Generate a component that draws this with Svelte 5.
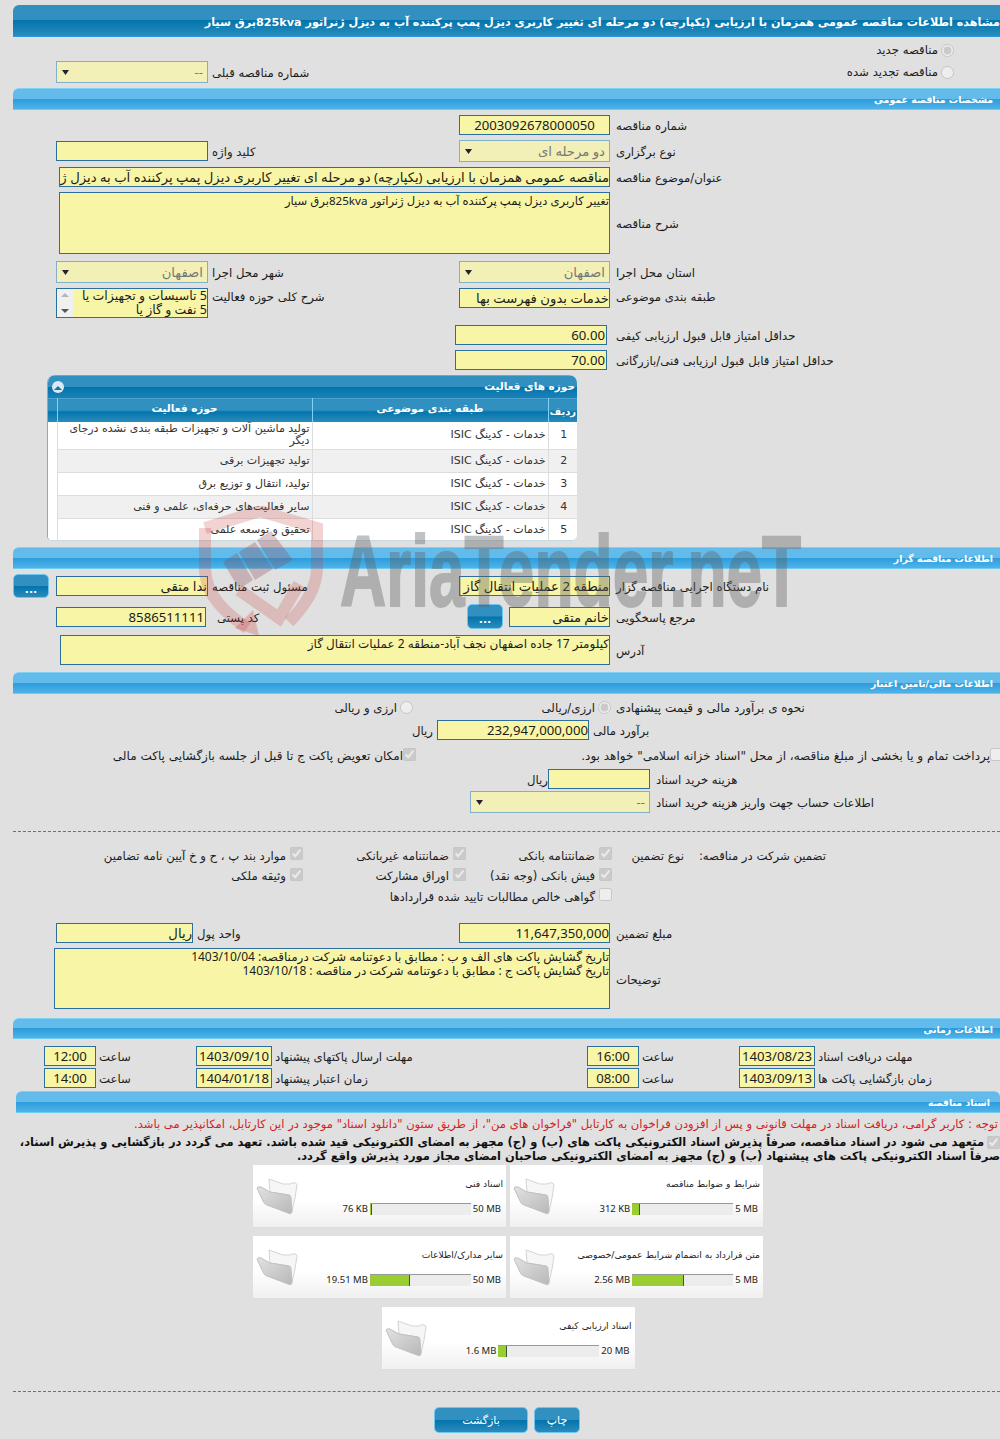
<script>
  const activities = [
    { n: 1, cat: "خدمات - کدینگ ISIC", field: "تولید ماشین آلات و تجهیزات طبقه بندی نشده درجای دیگر" },
    { n: 2, cat: "خدمات - کدینگ ISIC", field: "تولید تجهیزات برقی" },
    { n: 3, cat: "خدمات - کدینگ ISIC", field: "تولید، انتقال و توزیع برق" },
    { n: 4, cat: "خدمات - کدینگ ISIC", field: "سایر فعالیت‌های حرفه‌ای، علمی و فنی" },
    { n: 5, cat: "خدمات - کدینگ ISIC", field: "تحقیق و توسعه علمی" }
  ];

  const docs = [
    { title: "شرایط و ضوابط مناقصه", used: "312 KB", max: "5 MB", fill: 8 },
    { title: "اسناد فنی", used: "76 KB", max: "50 MB", fill: 2 },
    { title: "متن قرارداد به انضمام شرایط عمومی/خصوصی", used: "2.56 MB", max: "5 MB", fill: 52 },
    { title: "سایر مدارک/اطلاعات", used: "19.51 MB", max: "50 MB", fill: 40 },
    { title: "اسناد ارزیابی کیفی", used: "1.6 MB", max: "20 MB", fill: 9 }
  ];

  const arrow = "data:image/svg+xml,%3Csvg xmlns='http://www.w3.org/2000/svg' width='9' height='7'%3E%3Cpath d='M1 1h7L4.500 6z' fill='%23223'/%3E%3C/svg%3E";
</script>

<div class="page" style="--arrow: url(&quot;{arrow}&quot;)">
  <div class="bar dark title">مشاهده اطلاعات مناقصه عمومی همزمان با ارزیابی (یکپارچه) دو مرحله ای تغییر کاربری دیزل پمپ پرکننده آب به دیزل ژنراتور 825kvaبرق سیار</div>

  <div class="row r-new">
    <label class="lr radio-right"><input type="radio" disabled checked />مناقصه جدید</label>
  </div>
  <div class="row r-prev">
    <select class="fl" disabled><option>--</option></select>
    <span class="ll">شماره مناقصه قبلی</span>
    <label class="lr radio-right"><input type="radio" disabled />مناقصه تجدید شده</label>
  </div>

  <div class="bar light m5">مشخصات مناقصه عمومی</div>

  <div class="row m5">
    <input class="fr center" readonly value="2003092678000050" />
    <span class="lr">شماره مناقصه</span>
  </div>
  <div class="row m5">
    <input class="fl" readonly />
    <span class="ll">کلید واژه</span>
    <select class="fr" disabled><option>دو مرحله ای</option></select>
    <span class="lr">نوع برگزاری</span>
  </div>
  <div class="row m5">
    <input class="wide" readonly value="مناقصه عمومی همزمان با ارزیابی (یکپارچه) دو مرحله ای تغییر کاربری دیزل پمپ پرکننده آب به دیزل ژنراتور 825kvaبرق سیار" />
    <span class="lr">عنوان/موضوع مناقصه</span>
  </div>
  <div class="row m5">
    <textarea class="wide desc" readonly>تغییر کاربری دیزل پمپ پرکننده آب به دیزل ژنراتور 825kvaبرق سیار</textarea>
    <span class="lr">شرح مناقصه</span>
  </div>
  <div class="row m7">
    <select class="fl" disabled><option>اصفهان</option></select>
    <span class="ll">شهر محل اجرا</span>
    <select class="fr" disabled><option>اصفهان</option></select>
    <span class="lr">استان محل اجرا</span>
  </div>
  <div class="row m5 top">
    <div class="fl listbox">
      <div class="scroll"><i class="up"></i><i class="down"></i></div>
      <div class="items">5 تاسیسات و تجهیزات یا<br />5 نفت و گاز یا</div>
    </div>
    <span class="ll">شرح کلی حوزه فعالیت</span>
    <input class="fr" readonly value="خدمات بدون فهرست بها" />
    <span class="lr">طبقه بندی موضوعی</span>
  </div>
  <div class="row m7">
    <input class="fr score" readonly value="60.00" />
    <span class="lr">حداقل امتیاز قابل قبول ارزیابی کیفی</span>
  </div>
  <div class="row m5">
    <input class="fr score" readonly value="70.00" />
    <span class="lr">حداقل امتیاز قابل قبول ارزیابی فنی/بازرگانی</span>
  </div>

  <div class="grid-box">
    <div class="grid-head">
      <span>حوزه های فعالیت</span>
      <i class="collapse"></i>
    </div>
    <table>
      <thead>
        <tr>
          <th class="c-n">ردیف</th>
          <th class="c-cat">طبقه بندی موضوعی</th>
          <th class="c-field">حوزه فعالیت</th>
          <th class="c-pad"></th>
        </tr>
      </thead>
      <tbody>
        {#each activities as a}
          <tr class:alt={a.n % 2 === 0} class:tall={a.n === 1}>
            <td class="c-n">{a.n}</td>
            <td class="c-cat">{a.cat}</td>
            <td class="c-field">{a.field}</td>
            <td class="c-pad"></td>
          </tr>
        {/each}
      </tbody>
    </table>
  </div>

  <div class="bar light m6">اطلاعات مناقصه گزار</div>

  <div class="row m5 h24">
    <button class="btn dots lead">...</button>
    <input class="fl" readonly value="ندا متقی" />
    <span class="ll">مسئول ثبت مناقصه</span>
    <input class="fr" readonly value="منطقه 2 عملیات انتقال گاز" />
    <span class="lr">نام دستگاه اجرایی مناقصه گزار</span>
  </div>
  <div class="row m6 h25">
    <input class="fl postal" readonly value="8586511111" />
    <span class="ll postal-l">کد پستی</span>
    <div class="fr-pair">
      <button class="btn dots tall">...</button>
      <input class="contact" readonly value="خانم متقی" />
    </div>
    <span class="lr">مرجع پاسخگویی</span>
  </div>
  <div class="row m6">
    <textarea class="wide addr" readonly>کیلومتر 17 جاده اصفهان نجف آباد-منطقه 2 عملیات انتقال گاز</textarea>
    <span class="lr">آدرس</span>
  </div>

  <div class="bar light m7">اطلاعات مالی/تامین اعتبار</div>

  <div class="row m3 h20">
    <div class="radios">
      <label><input type="radio" disabled checked />ارزی/ریالی</label>
      <label><input type="radio" disabled />ارزی و ریالی</label>
    </div>
    <span class="lr">نحوه ی برآورد مالی و قیمت پیشنهادی</span>
  </div>
  <div class="line m3 budget">
    <span class="unit">ریال</span>
    <input class="w152" readonly value="232,947,000,000" />
    <span>برآورد مالی</span>
  </div>
  <div class="checks m6">
    <label class="pay"><input type="checkbox" disabled />پرداخت تمام و یا بخشی از مبلغ مناقصه، از محل "اسناد خزانه اسلامی" خواهد بود.</label>
    <label><input type="checkbox" disabled checked />امکان تعویض پاکت ج تا قبل از جلسه بازگشایی پاکت مالی</label>
  </div>
  <div class="line m3 cost">
    <span class="unit">ریال</span>
    <input class="w102" readonly />
    <span>هزینه خرید اسناد</span>
  </div>
  <div class="line m2 account">
    <select class="w180" disabled><option>--</option></select>
    <span>اطلاعات حساب جهت واریز هزینه خرید اسناد</span>
  </div>

  <div class="dash d1"></div>

  <div class="guarantee">
    <span>تضمین شرکت در مناقصه:</span>
    <span>نوع تضمین</span>
    <label><input type="checkbox" disabled checked />ضمانتنامه بانکی</label>
    <label><input type="checkbox" disabled checked />ضمانتنامه غیربانکی</label>
    <label><input type="checkbox" disabled checked />موارد بند پ ، ح و خ آیین نامه تضامین</label>
    <span></span><span></span>
    <label><input type="checkbox" disabled checked />فیش بانکی (وجه نقد)</label>
    <label><input type="checkbox" disabled checked />اوراق مشارکت</label>
    <label><input type="checkbox" disabled checked />وثیقه ملکی</label>
    <span></span><span></span>
    <label class="wide-check"><input type="checkbox" disabled />گواهی خالص مطالبات تایید شده قراردادها</label>
  </div>

  <div class="row m17">
    <input class="fl unit-f" readonly value="ریال" />
    <span class="ll unit-l">واحد پول</span>
    <input class="fr" readonly value="11,647,350,000" />
    <span class="lr">مبلغ تضمین</span>
  </div>
  <div class="row m5">
    <textarea class="wide notes" readonly>تاریخ گشایش پاکت های الف و ب : مطابق با دعوتنامه شرکت درمناقصه: 1403/10/04
تاریخ گشایش پاکت ج : مطابق با دعوتنامه شرکت در مناقصه : 1403/10/18</textarea>
    <span class="lr">توضیحات</span>
  </div>

  <div class="bar light short m9">اطلاعات زمانی</div>

  <div class="times m7">
    <input readonly value="12:00" /><span>ساعت</span>
    <input readonly value="1403/09/10" /><span>مهلت ارسال پاکتهای پیشنهاد</span>
    <input readonly value="16:00" /><span>ساعت</span>
    <input readonly value="1403/08/23" /><span>مهلت دریافت اسناد</span>
  </div>
  <div class="times m2">
    <input readonly value="14:00" /><span>ساعت</span>
    <input readonly value="1404/01/18" /><span>زمان اعتبار پیشنهاد</span>
    <input readonly value="08:00" /><span>ساعت</span>
    <input readonly value="1403/09/13" /><span>زمان بازگشایی پاکت ها</span>
  </div>

  <div class="bar light docs-bar">اسناد مناقصه</div>

  <p class="notice">توجه : کاربر گرامی، دریافت اسناد در مهلت قانونی و پس از افزودن فراخوان به کارتابل "فراخوان های من"، از طریق ستون "دانلود اسناد" موجود در این کارتابل، امکانپذیر می باشد.</p>
  <p class="commit">
    <input type="checkbox" disabled checked />متعهد می شود در اسناد مناقصه، صرفاً پذیرش اسناد الکترونیکی پاکت های (ب) و (ج) مجهز به امضای الکترونیکی قید شده باشد. تعهد می گردد در بازگشایی و پذیرش اسناد،<br />
    صرفاً اسناد الکترونیکی پاکت های پیشنهاد (ب) و (ج) مجهز به امضای الکترونیکی صاحبان امضای مجاز مورد پذیرش واقع گردد.
  </p>

  <div class="cards">
    {#each docs as d}
      <div class="card">
        <div class="card-body">
          <div class="card-title">{d.title}</div>
          <div class="meter">
            <span class="used">{d.used}</span>
            <div class="track"><div class="fill" style="width: {d.fill}px"></div></div>
            <span class="max">{d.max}</span>
          </div>
        </div>
        <svg class="folder" viewBox="0 0 43 38" width="43" height="38">
          <defs>
            <linearGradient id="fold{d.fill}" x1="0" y1="0" x2="1" y2="1">
              <stop offset="0" stop-color="#e2e2e2" />
              <stop offset="1" stop-color="#b8b8b8" />
            </linearGradient>
          </defs>
          <path d="M13 1 L27 6 L34 6 Q40 3 41 7 L39 20 L36 33 L33 17 L14 14 Z" fill="#f6f6f6" stroke="#d4d4d4" />
          <path d="M1 10 Q2 8 5 9 L14 14 L33 17 Q35 17 35 20 L36 33 Q36 37 32 35 L11 27 Q8 26 7 23 Z" fill="url(#fold{d.fill})" stroke="#c0c0c0" />
        </svg>
      </div>
    {/each}
  </div>

  <div class="dash d2"></div>

  <div class="actions">
    <button class="btn print">چاپ</button>
    <button class="btn back">بازگشت</button>
  </div>

  <!-- watermark lies over the form -->
  <div class="mark">
    <svg viewBox="0 0 130 135" width="130" height="135">
      <path d="M8 22 L63 5 L120 22 V62 C120 84 106 102 92 116" fill="none" stroke="#c83232" stroke-opacity=".22" stroke-width="12" />
      <path d="M8 22 V62 C8 90 30 108 50 122" fill="none" stroke="#c83232" stroke-opacity=".22" stroke-width="12" />
      <path d="M38 122 L62 130 L56 104 Z" fill="#c83232" fill-opacity=".26" />
      <path d="M26 56 L40 47 L56 74 L42 83 Z M42 46 L58 36 L76 63 L58 74 Z M60 34 L74 25 L96 54 L78 64 Z" fill="#8a4a55" fill-opacity=".3" />
      <path d="M42 84 L82 112 L102 78" fill="none" stroke="#c83232" stroke-opacity=".22" stroke-width="12" />
    </svg>
    <span>AriaTender.neT</span>
  </div>
</div>

<style>
  :global(body) {
    background: #e0e0e0;
  }

  .page {
    position: relative;
    width: 1000px;
    height: 1439px;
    overflow: hidden;
    padding-top: 5px;
    box-sizing: border-box;
    background: #e0e0e0;
    color: #1c1c1c;
    font-family: "DejaVu Sans", sans-serif;
    font-size: 11.7px;
    line-height: 14px;
  }

  .m2 { margin-top: 2px; }
  .m3 { margin-top: 3px; }
  .m5 { margin-top: 5px; }
  .m6 { margin-top: 6px; }
  .m7 { margin-top: 7px; }
  .m9 { margin-top: 9px; }
  .m17 { margin-top: 17px; }

  .bar {
    margin-left: 13px;
    height: 22px;
    box-sizing: border-box;
    padding-right: 7px;
    border-radius: 6px 0 0 0;
    color: #fff;
    font-weight: bold;
    font-size: 9.4px;
    line-height: 21px;
    direction: rtl;
    white-space: nowrap;
  }
  .light {
    border-top: 1px solid #7fd2f4;
    border-bottom: 1px solid #6ecbf2;
    background: linear-gradient(#62bbea 0, #62bbea 48%, #2c9cdc 50%, #4fb3e8 100%);
  }
  .dark {
    border-bottom: 1px solid #2b9ae0;
    background: linear-gradient(#3190c0 0, #3190c0 48%, #0374ac 50%, #2b8cbc 100%);
  }
  .title {
    height: 32px;
    padding: 0 0 0 203px;
    direction: ltr;
    text-align: left;
    font-size: 11.2px;
    line-height: 35px;
    overflow: hidden;
    unicode-bidi: plaintext;
  }
  .short { height: 21px; }
  .docs-bar { margin: 3px 0 0 16px; border-radius: 6px 6px 0 0; padding-right: 10px; }

  .row {
    display: grid;
    grid-template-columns: 56px 152px 251px 151px 1fr;
    align-items: center;
    direction: ltr;
  }
  .row.top { align-items: start; }
  .r-new { margin-top: 4px; height: 18px; }
  .r-prev { margin-top: 2px; height: 22px; }
  .h24 { height: 24px; }
  .h25 { height: 25px; }
  .h20 { height: 20px; }

  .fl { grid-column: 2; }
  .fr { grid-column: 4; }
  .lead { grid-column: 1; margin-left: 13px; }
  .ll, .lr {
    direction: rtl;
    text-align: left;
    white-space: nowrap;
    padding-top: 2px;
  }
  .ll { grid-column: 3; padding-left: 4px; }
  .lr { grid-column: 5; padding-left: 6px; }
  .row.top .ll, .row.top .lr { padding-top: 2px; }
  .radio-right {
    text-align: right;
    padding: 0 46px 0 0;
    display: flex;
    align-items: center;
    gap: 3px;
    line-height: 18px;
  }
  .radio-right input { margin-top: -5px; }
  .h20 .lr { font-size: 12px; }

  :where(input:not([type])), textarea, select {
    width: 100%;
    box-sizing: border-box;
    margin: 0;
    border: 1px solid #2a6f9e;
    border-radius: 0;
    background: #f8f6a6;
    color: #1c1c1c;
    font-family: "Noto Sans", "DejaVu Sans", sans-serif;
    font-size: 13.2px;
    direction: rtl;
    outline: none;
  }
  :where(input:not([type])) {
    height: 20px;
    padding: 0;
  }
  select {
    height: 22px;
    padding: 0 4px 0 0;
    appearance: none;
    border-color: #80b0cc;
    background: #f2f0b6 var(--arrow) no-repeat 4px 7px;
    color: #777;
    opacity: 1;
  }
  textarea {
    display: block;
    padding: 1px 0 0;
    resize: none;
    overflow: hidden;
    font-size: 12px;
    line-height: 14px;
  }
  .center { text-align: center; }
  .wide { grid-column: 2 / 5; width: 551px; margin-left: 3px; }
  .desc { height: 62px; font-size: 11.6px; }
  .addr { height: 30px; width: 550px; margin-left: 4px; }
  .notes { height: 61px; width: 556px; margin-left: -2px; }
  .score { width: 152px; margin: 0 0 0 -4px; padding-right: 1px; }
  .postal { width: 150px; padding-right: 1px; }
  .postal-l { padding-left: 9px; }
  .unit-f { width: 137px; }
  .unit-l { margin-left: -15px; }

  .fr-pair {
    grid-column: 4;
    display: flex;
    justify-content: flex-end;
    align-items: center;
    gap: 6px;
  }
  .contact { width: 101px; }

  .btn {
    border: 1px solid #6cc6f0;
    border-radius: 5px;
    background: linear-gradient(#3190c0 0, #3190c0 48%, #0374ac 52%, #2b8cbc 100%);
    color: #fff;
    font-family: "DejaVu Sans", sans-serif;
    font-size: 11px;
    padding: 0;
    cursor: pointer;
  }
  .dots { width: 36px; height: 24px; font-weight: bold; line-height: 24px; padding-top: 3px; }
  .dots.tall { height: 25px; }

  .listbox {
    display: flex;
    height: 30px;
    box-sizing: border-box;
    border: 1px solid #2a6f9e;
    background: #f8f6a6;
    font-family: "Noto Sans", "DejaVu Sans", sans-serif;
    font-size: 12.5px;
    overflow: hidden;
  }
  .scroll {
    width: 16px;
    flex: none;
    background: #f0f0f0;
    position: relative;
  }
  .scroll i {
    position: absolute;
    left: 4px;
    border: 4px solid transparent;
  }
  .up { top: 0; border-bottom-color: #b5b5b5 !important; }
  .down { bottom: 0; border-top-color: #555 !important; }
  .items {
    flex: 1;
    direction: rtl;
    line-height: 14px;
    white-space: nowrap;
  }

  .grid-box {
    margin: 5px 0 0 47px;
    width: 530px;
    height: 166px;
    box-sizing: border-box;
    border-radius: 8px 8px 5px 5px;
    border-left: 1px solid #6fb4d8;
    border-bottom: 1px solid #c4d8e2;
    background: #fff;
    overflow: hidden;
  }
  .grid-head {
    position: relative;
    height: 23px;
    box-sizing: border-box;
    padding-right: 2px;
    border-top: 1px solid #5ab0da;
    background: linear-gradient(#3190c0 0, #3190c0 48%, #0374ac 52%, #1a82b6 100%);
    color: #fff;
    font-weight: bold;
    font-size: 10.5px;
    line-height: 21px;
    text-align: right;
    direction: rtl;
  }
  .collapse {
    position: absolute;
    left: 4px;
    top: 5px;
    width: 12px;
    height: 12px;
    border-radius: 50%;
    background: #dbe9f3;
  }
  .collapse::after {
    content: "";
    position: absolute;
    left: 2px;
    top: 1px;
    border: 4px solid transparent;
    border-bottom-color: #1d6f9e;
  }
  table {
    width: 529px;
    table-layout: fixed;
    border-collapse: collapse;
    direction: rtl;
    font-size: 11px;
    line-height: 12px;
  }
  th, td { box-sizing: border-box; }
  th {
    height: 23px;
    padding: 0;
    border-left: 1px solid #7fd2f4;
    border-top: 1px solid #4ea2d2;
    background: linear-gradient(#3190c0 0, #3190c0 48%, #0374ac 52%, #2b8cbc 100%);
    color: #fff;
    font-weight: bold;
    font-size: 10.5px;
    text-align: center;
    vertical-align: top;
    line-height: 19px;
  }
  th.c-n { vertical-align: bottom; line-height: 20px; font-size: 10px; }
  th.c-pad { border-left: none; }
  .c-n { width: 29px; }
  .c-cat { width: 236px; }
  .c-field { width: 255px; }
  .c-pad { width: 9px; }
  td {
    height: 23px;
    padding: 0 2px;
    border-left: 1px solid #ddd;
    border-bottom: 1px solid #ddd;
    text-align: right;
    color: #333;
  }
  td.c-n { text-align: center; font-size: 11px; padding-right: 0; }
  td.c-pad { border-left: none; border-bottom: none; background: #fff; }
  tr.alt td { background: #f0f0f0; }
  tr.alt td.c-pad { background: #fff; }
  tr.tall td { height: 28px; }

  .radios {
    grid-column: 1 / 5;
    display: flex;
    direction: rtl;
  }
  .radios label {
    display: flex;
    align-items: center;
    gap: 3px;
    width: 199px;
    white-space: nowrap;
    margin-right: -1px;
    padding-top: 1px;
  }
  input[type="radio"], input[type="checkbox"] {
    margin: 0;
    width: 13px;
    height: 13px;
    flex: none;
  }

  .line {
    display: flex;
    align-items: center;
    direction: ltr;
    white-space: nowrap;
  }
  .line > span { direction: rtl; padding-top: 2px; }
  .budget { padding-left: 414px; gap: 4px; }
  .budget .unit { width: 19px; }
  .w152 { width: 152px; }
  .cost { padding-left: 528px; }
  .cost .unit { width: 20px; }
  .cost span:last-child { margin-left: 6px; }
  .w102 { width: 102px; }
  .account { padding-left: 470px; gap: 6px; }
  .w180 { width: 180px; }

  .checks {
    display: flex;
    direction: rtl;
    height: 20px;
    font-size: 12px;
    white-space: nowrap;
    align-items: center;
  }
  .checks label {
    display: flex;
    align-items: center;
    gap: 0;
  }
  .checks input { margin-top: -4px; }
  .pay { width: 587px; margin-right: -3px; }

  .dash {
    margin-left: 13px;
    border-top: 1px dashed #2a86b8;
  }
  .d1 { margin-top: 18px; }
  .d2 { margin-top: 21px; }

  .guarantee {
    margin-top: 13px;
    height: 61px;
    display: grid;
    direction: rtl;
    grid-template-columns: 142px 72px 146px 163px 1fr;
    grid-auto-rows: 20px;
    row-gap: 0.5px;
    padding-right: 174px;
    align-items: center;
    white-space: nowrap;
  }
  .guarantee span, .guarantee label { padding-top: 1px; }
  .guarantee label {
    display: flex;
    align-items: center;
    gap: 4px;
  }
  .guarantee input { margin-top: -4px; }
  .wide-check { grid-column: 3 / 6; }

  .times {
    display: grid;
    grid-template-columns: 52px 100px 76px 315px 52px 100px 76px 1fr;
    margin-left: 44px;
    align-items: center;
  }
  .times input {
    text-align: center;
    height: 20px;
    direction: ltr;
  }
  .times span {
    direction: rtl;
    text-align: left;
    padding: 2px 0 0 3px;
    white-space: nowrap;
  }

  p {
    margin: 0;
    direction: rtl;
    white-space: nowrap;
  }
  .notice {
    margin-top: 4px;
    color: #d32222;
    font-size: 11.55px;
    padding-right: 2px;
  }
  .commit {
    margin-top: 4px;
    font-weight: bold;
    font-size: 11.45px;
    line-height: 14px;
    color: #111;
  }
  .commit input { margin-left: 3px; vertical-align: middle; }

  .cards {
    margin: 2px 0 0 253px;
    width: 510px;
    display: flex;
    flex-wrap: wrap;
    justify-content: center;
    gap: 8px 4px;
    direction: rtl;
  }
  .card {
    width: 253px;
    height: 63px;
    display: flex;
    justify-content: space-between;
    background: linear-gradient(#fff 0, #fff 55%, #f0f0f0 100%);
    border-bottom: 1px solid #ddd;
    box-sizing: border-box;
  }
  .card-body { flex: 1; padding-right: 3px; }
  .card-title {
    margin-top: 13px;
    font-size: 9.2px;
    line-height: 12px;
    white-space: nowrap;
  }
  .meter {
    display: flex;
    align-items: center;
    justify-content: flex-end;
    margin-top: 12px;
    padding-right: 2px;
    font-family: "Noto Sans", "DejaVu Sans", sans-serif;
    font-size: 9.5px;
    white-space: nowrap;
    gap: 2px;
    direction: ltr;
  }
  .track {
    width: 101px;
    height: 11px;
    border-top: 1px solid #999;
    background: #ececec;
  }
  .fill {
    height: 100%;
    box-sizing: border-box;
    background: #9acd32;
    border-right: 1px solid #3a5a2a;
  }
  .folder { margin: 13px 0 0 3px; flex: none; }

  .actions {
    display: flex;
    direction: rtl;
    gap: 6px;
    margin: 15px 0 0 434px;
    width: 146px;
  }
  .print { width: 46px; height: 26px; }
  .back { width: 94px; height: 26px; }

  .mark {
    position: absolute;
    left: 197px;
    top: 506px;
    width: 620px;
    height: 140px;
    pointer-events: none;
    z-index: 5;
  }
  .mark svg { position: absolute; left: 0; top: 0; }
  .mark span {
    position: absolute;
    left: 143px;
    top: 15px;
    font-family: "Liberation Sans", sans-serif;
    font-weight: bold;
    font-size: 100px;
    line-height: 100px;
    white-space: nowrap;
    color: #606060;
    -webkit-text-stroke: 2px #606060;
    opacity: 0.38;
    transform-origin: left bottom;
    transform: scaleX(0.64);
  }
</style>
